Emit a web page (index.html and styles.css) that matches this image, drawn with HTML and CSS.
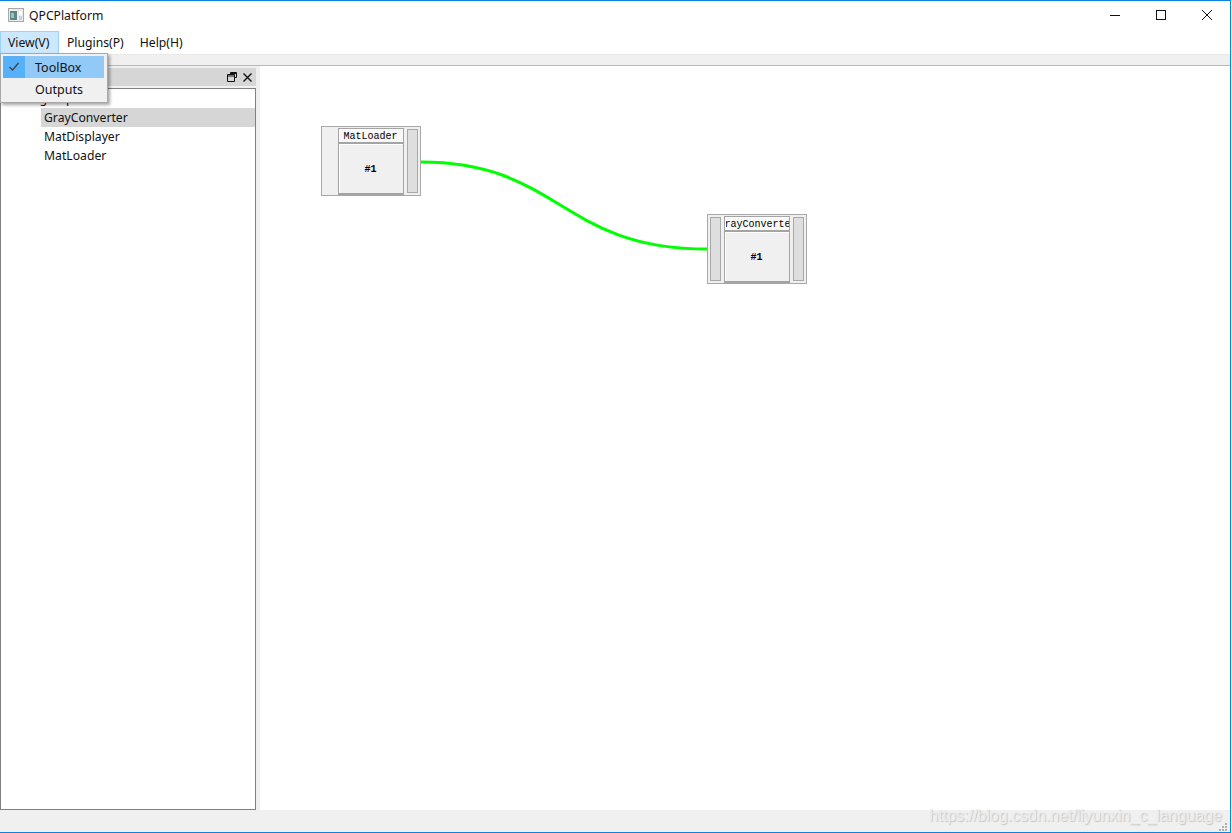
FILE: index.html
```html
<!DOCTYPE html>
<html lang="en">
<head>
    <meta charset="UTF-8">
    <meta name="viewport" content="width=device-width, initial-scale=1.0">
    <title>QPCPlatform</title>
    <link rel="stylesheet" href="styles.css">
</head>
<body>
    <div class="window">
        <div class="titlebar">
            <svg class="app-icon" width="16" height="14" viewBox="0 0 16 14">
                <rect x="0.5" y="0.5" width="15" height="13" fill="#ececec" stroke="#a8a8a8"/>
                <rect x="2" y="3" width="7" height="9" fill="#5a8688"/>
                <rect x="3" y="5" width="3" height="5" fill="#9cc4bc"/>
                <rect x="11" y="3" width="3" height="4" fill="#ffffff"/>
                <rect x="11" y="8" width="3" height="4" fill="#c4d4d4"/>
            </svg>
            <span class="app-name">QPCPlatform</span>
            <div class="win-buttons">
                <svg width="12" height="12" viewBox="0 0 12 12"><path d="M1 6.5h10" stroke="#111" fill="none"/></svg>
                <svg width="12" height="12" viewBox="0 0 12 12"><rect x="1.5" y="1.5" width="9" height="9" stroke="#111" fill="none"/></svg>
                <svg width="12" height="12" viewBox="0 0 12 12"><path d="M1 1l10 10M11 1L1 11" stroke="#111" fill="none"/></svg>
            </div>
        </div>
        <div class="menubar">
            <div class="menu-item active">View(V)</div>
            <div class="menu-item">Plugins(P)</div>
            <div class="menu-item">Help(H)</div>
        </div>
        <div class="toolbar"></div>
        <div class="main">
            <div class="dock">
                <div class="dock-title">
                    <svg width="10" height="10" viewBox="0 0 10 10"><path d="M3.5 2.5V.5h6v5h-2M.5 2.5h7v7h-7zM.5 4h7M3.5 1.5h6" stroke="#111" fill="none"/></svg>
                    <svg width="9" height="9" viewBox="0 0 9 9"><path d="M.5.5l8 8M8.5.5l-8 8" stroke="#111" stroke-width="1.4" fill="none"/></svg>
                </div>
                <div class="tree">
                    <div class="tree-group">ImgHelp</div>
                    <div class="tree-row selected">GrayConverter</div>
                    <div class="tree-row">MatDisplayer</div>
                    <div class="tree-row">MatLoader</div>
                </div>
            </div>
            <div class="canvas">
                <svg class="wires" width="970" height="744" viewBox="0 0 970 744">
                    <path d="M161 96C300 96 300 183 447 183" stroke="#00ff00" stroke-width="3" fill="none"/>
                </svg>
                <div class="node node-loader">
                    <div class="port port-left"></div>
                    <div class="node-body">
                        <div class="node-name">MatLoader</div>
                        <div class="node-id">#1</div>
                    </div>
                    <div class="port port-right"><div class="port-inner"></div></div>
                </div>
                <div class="node node-gray">
                    <div class="port port-left"><div class="port-inner"></div></div>
                    <div class="node-body">
                        <div class="node-name clipped"><span>GrayConverter</span></div>
                        <div class="node-id">#1</div>
                    </div>
                    <div class="port port-right"><div class="port-inner"></div></div>
                </div>
            </div>
        </div>
        <div class="statusbar">
            <svg class="grip" width="8" height="8" viewBox="0 0 8 8">
                <path d="M6 0h2v2H6zM3 3h2v2H3zM6 3h2v2H6zM0 6h2v2H0zM3 6h2v2H3zM6 6h2v2H6z" fill="#b0b0b0"/>
            </svg>
        </div>
        <div class="popup">
            <div class="popup-row checked">
                <div class="check">
                    <svg width="12" height="10" viewBox="0 0 12 10"><path d="M1.5 5l3 3 6-7" stroke="#444" stroke-width="1.4" fill="none"/></svg>
                </div>
                <span>ToolBox</span>
            </div>
            <div class="popup-row">
                <div class="check"></div>
                <span>Outputs</span>
            </div>
        </div>
        <div class="watermark">https://blog.csdn.net/liyunxin_c_language</div>
    </div>
</body>
</html>
```

FILE: styles.css
```css
* {
    box-sizing: border-box;
}
html, body {
    margin: 0;
    height: 100%;
    overflow: hidden;
}
body {
    font-family: "Noto Sans", sans-serif;
    font-size: 12.2px;
    color: #111;
    background-color: #fff;
}
.window {
    position: relative;
    display: flex;
    flex-direction: column;
    width: 1231px;
    height: 833px;
    border: 1px solid #0a84e0;
    border-left: none;
    background-color: #fff;
}
.titlebar {
    display: flex;
    align-items: center;
    height: 30px;
    flex: none;
    padding: 0 0 2px 8px;
}
.app-icon {
    margin-right: 5px;
}
.win-buttons {
    display: flex;
    gap: 34px;
    margin-left: auto;
    padding-right: 17px;
}
.menubar {
    display: flex;
    height: 23px;
    flex: none;
}
.menu-item {
    display: flex;
    align-items: center;
    padding: 0 8px;
}
.menu-item.active {
    background-color: #cce8ff;
    border: 1px solid #99d1ff;
    padding: 0 8px 0 7px;
    margin-right: 0;
    width: 59px;
}
.toolbar {
    height: 12px;
    flex: none;
    background-color: #f0f0f0;
    border-top: 1px solid #e8e8e8;
    border-bottom: 1px solid #b8b8b8;
}
.main {
    display: flex;
    flex: 1;
    min-height: 0;
}
.dock {
    display: flex;
    flex-direction: column;
    width: 260px;
    flex: none;
    padding: 2px 4px 0 0;
    background-color: #f0f0f0;
}
.dock-title {
    display: flex;
    align-items: center;
    justify-content: flex-end;
    gap: 6px;
    height: 18px;
    flex: none;
    padding-right: 4px;
    background-color: #d6d6d6;
}
.tree {
    flex: 1;
    margin-top: 2px;
    background-color: #fff;
    border: 1px solid #808080;
}
.tree-group {
    height: 19px;
    padding-left: 23px;
    line-height: 19px;
}
.tree-row {
    height: 19px;
    margin-left: 40px;
    padding-left: 3px;
    line-height: 19px;
}
.tree-row.selected {
    background-color: #d6d6d6;
}
.canvas {
    position: relative;
    flex: 1;
    background-color: #fff;
}
.wires {
    position: absolute;
    left: 0;
    top: 0;
}
.node {
    position: absolute;
    display: flex;
    width: 100px;
    height: 70px;
    background-color: #f0f0f0;
    border: 1px solid #a8a8a8;
}
.node-loader {
    left: 61px;
    top: 60px;
}
.node-gray {
    left: 447px;
    top: 148px;
}
.port {
    width: 16px;
    flex: none;
}
.port-left {
    padding: 2px 3px 2px 2px;
}
.port-right {
    padding: 2px 2px 2px 3px;
}
.port-inner {
    height: 100%;
    background-color: #dedede;
    border: 1px solid #a8a8a8;
}
.node-body {
    display: flex;
    flex-direction: column;
    flex: 1;
    min-width: 0;
    gap: 2px;
    margin-top: 1px;
    padding: 1px 1px 2px;
    background-color: #a4a4a4;
}
.node-name {
    height: 13px;
    flex: none;
    overflow: hidden;
    padding-right: 2px;
    background-color: #f8f8f8;
    border-top: 1px solid #fff;
    border-left: 1px solid #fff;
    font-family: "Liberation Mono", monospace;
    font-size: 10px;
    line-height: 14px;
    color: #000;
    text-align: center;
    white-space: nowrap;
}
.node-name.clipped {
    display: flex;
    justify-content: center;
    padding-right: 0;
}
.node-name.clipped span {
    flex: none;
}
.node-id {
    display: flex;
    flex: 1;
    align-items: center;
    justify-content: center;
    padding-right: 2px;
    background-color: #f0f0f0;
    border-top: 1px solid #fff;
    border-left: 1px solid #fff;
    font-family: "Liberation Mono", monospace;
    font-size: 10px;
    font-weight: bold;
    color: #000;
}
.statusbar {
    position: relative;
    height: 22px;
    flex: none;
    background-color: #f0f0f0;
}
.grip {
    position: absolute;
    right: 3px;
    bottom: 1px;
}
.popup {
    position: absolute;
    left: 0;
    top: 52px;
    width: 108px;
    height: 50px;
    padding: 2px 3px 2px 2px;
    background-color: #f0f0f0;
    border: 1px solid #a8a8a8;
    box-shadow: 2px 2px 3px rgba(0, 0, 0, 0.35);
    font-size: 12.5px;
}
.popup-row {
    display: flex;
    align-items: center;
    height: 22px;
}
.popup-row.checked {
    background-color: #91c9f7;
}
.check {
    display: flex;
    align-items: center;
    justify-content: center;
    width: 22px;
    height: 100%;
    margin-right: 10px;
}
.popup-row.checked .check {
    background-color: #56b0fa;
}
.watermark {
    position: absolute;
    right: 8px;
    bottom: 7px;
    font-family: "Liberation Sans", sans-serif;
    font-size: 16px;
    color: #ececec;
    text-shadow: 1px 1px 1px #c4c4c4;
}
```
